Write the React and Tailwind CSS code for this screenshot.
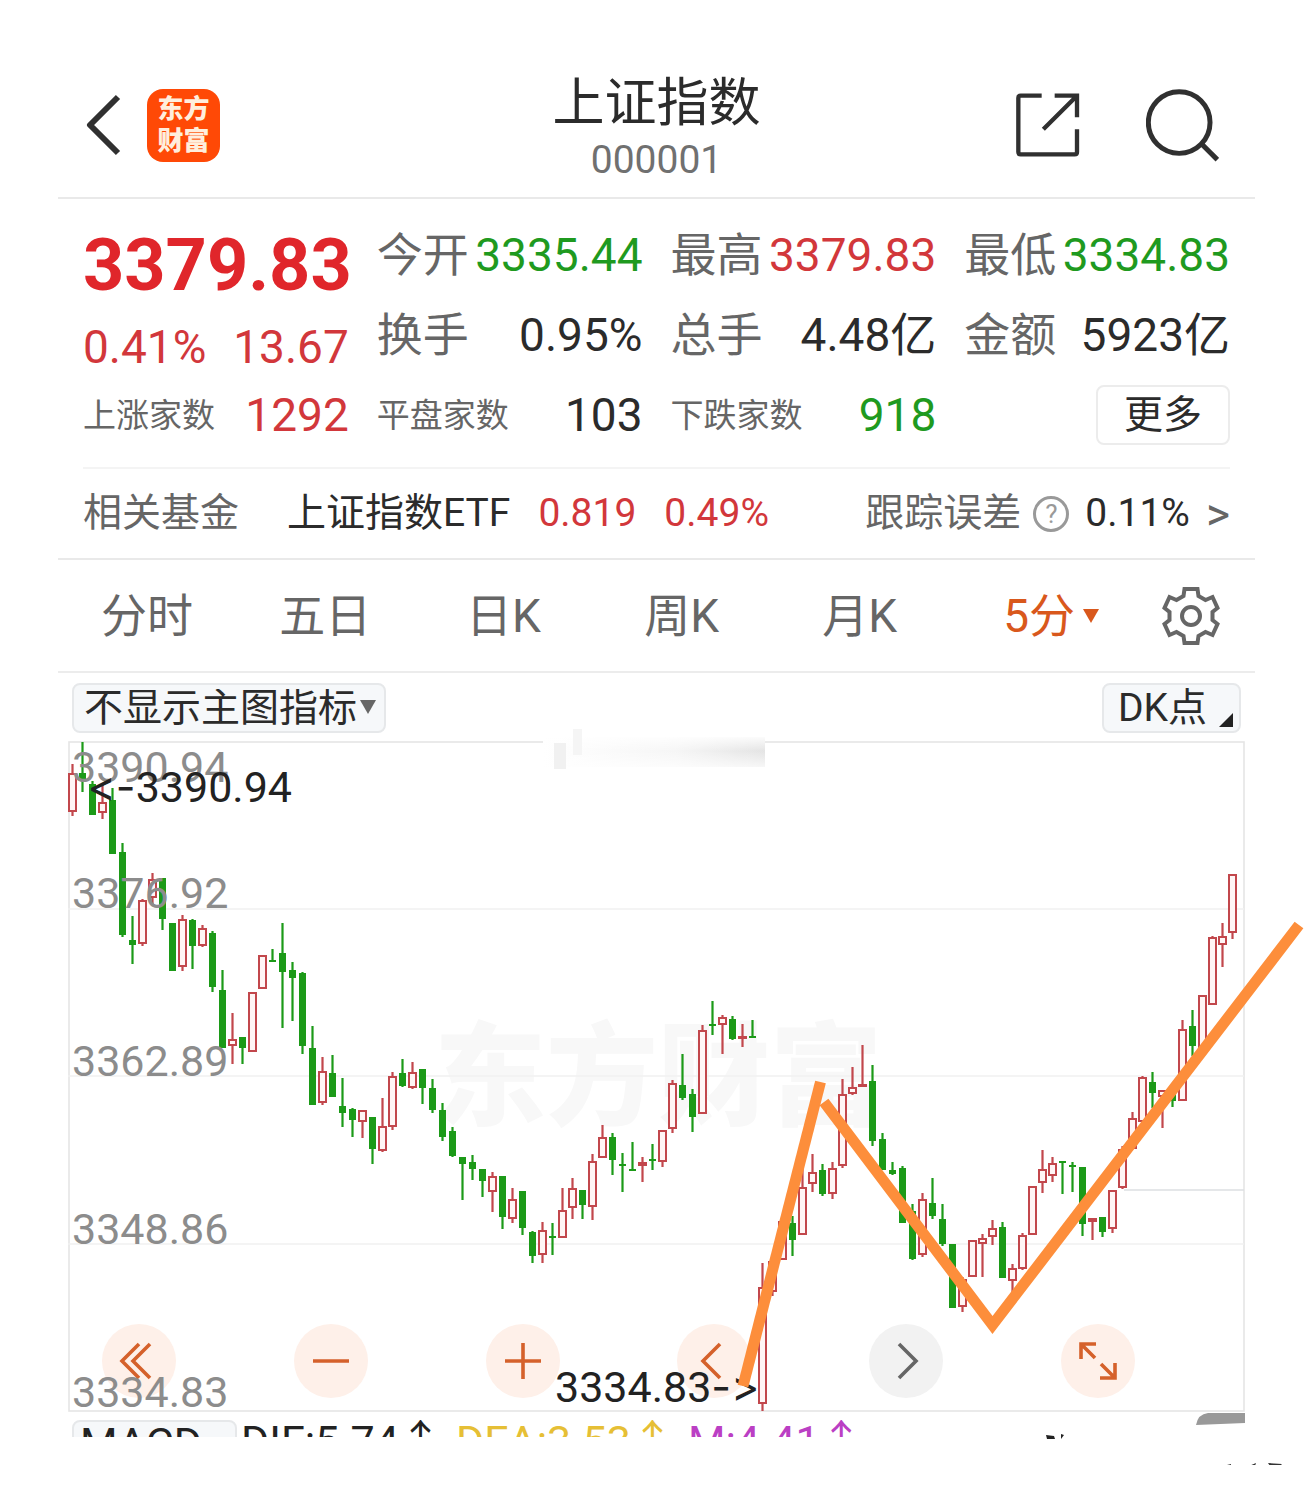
import { useState } from "react";

// [direction, high, body top, body bottom, low] in chart units
const candles = [
  ["up", 23, 32, 71, 75], ["down", 1, 32, 40, 51], ["down", 40, 43, 74, 74], ["up", 42, 61, 72, 78],
  ["down", 47, 59, 113, 113], ["down", 102, 111, 194, 196], ["down", 175, 199, 204, 223], ["up", 158, 159, 203, 205],
  ["up", 132, 138, 157, 164], ["down", 137, 137, 178, 189], ["down", 182, 182, 230, 230], ["up", 174, 178, 226, 230],
  ["down", 178, 179, 205, 228], ["up", 184, 187, 205, 206], ["down", 190, 192, 246, 251], ["down", 229, 249, 307, 307],
  ["up", 272, 298, 305, 323], ["down", 296, 296, 307, 323], ["up", 251, 251, 311, 311], ["up", 214, 214, 248, 248],
  ["down", 208, 219, 220, 220], ["down", 182, 212, 231, 287], ["down", 221, 229, 237, 280], ["down", 231, 232, 305, 313],
  ["down", 285, 307, 364, 364], ["up", 316, 330, 362, 364], ["down", 314, 332, 356, 356], ["down", 337, 365, 372, 386],
  ["down", 367, 368, 379, 396], ["up", 369, 369, 381, 397], ["down", 376, 376, 408, 423], ["up", 357, 385, 410, 411],
  ["up", 331, 335, 386, 389], ["down", 318, 332, 345, 346], ["up", 321, 331, 347, 348], ["down", 328, 328, 347, 363],
  ["down", 338, 347, 369, 372], ["down", 362, 369, 396, 400], ["down", 386, 390, 415, 416], ["down", 416, 416, 423, 459],
  ["down", 414, 421, 428, 439], ["down", 428, 428, 440, 456], ["up", 431, 435, 451, 471], ["down", 435, 435, 476, 488],
  ["up", 447, 458, 478, 482], ["down", 450, 450, 487, 494], ["down", 490, 491, 515, 522], ["up", 481, 489, 514, 522],
  ["down", 482, 495, 497, 514], ["up", 447, 469, 497, 497], ["up", 437, 447, 467, 478], ["down", 449, 449, 464, 478],
  ["up", 413, 420, 466, 479], ["up", 384, 396, 417, 417], ["down", 392, 396, 419, 434], ["down", 412, 423, 424, 451],
  ["down", 401, 428, 429, 429], ["up", 416, 421, 425, 441], ["down", 403, 418, 419, 429], ["up", 389, 389, 421, 426],
  ["up", 339, 342, 388, 392], ["down", 313, 344, 357, 359], ["down", 348, 353, 376, 391], ["up", 284, 289, 373, 373],
  ["down", 260, 283, 285, 294], ["up", 274, 276, 284, 313], ["down", 275, 278, 298, 299], ["up", 283, 295, 298, 306],
  ["down", 279, 295, 296, 296], ["up", 522, 546, 663, 670], ["up", 515, 520, 551, 555], ["up", 478, 480, 519, 519],
  ["down", 475, 482, 499, 515], ["up", 425, 446, 494, 494], ["up", 413, 431, 443, 451], ["down", 423, 429, 453, 455],
  ["up", 421, 427, 453, 458], ["up", 338, 353, 425, 427], ["up", 326, 346, 353, 354], ["up", 304, 343, 346, 346],
  ["down", 324, 340, 400, 405], ["down", 392, 398, 429, 429], ["down", 421, 429, 433, 434], ["down", 425, 427, 482, 482],
  ["down", 463, 470, 518, 519], ["up", 452, 458, 514, 516], ["down", 437, 462, 475, 478], ["down", 463, 478, 503, 505],
  ["down", 503, 503, 567, 567], ["up", 536, 538, 566, 571], ["up", 499, 499, 536, 536], ["up", 493, 497, 503, 536],
  ["up", 479, 487, 496, 504], ["down", 481, 486, 537, 537], ["up", 523, 527, 540, 552], ["up", 492, 494, 528, 529],
  ["up", 445, 445, 494, 494], ["up", 409, 428, 442, 452], ["up", 416, 422, 435, 441], ["down", 420, 420, 422, 453],
  ["down", 421, 424, 425, 451], ["down", 426, 426, 483, 495], ["up", 477, 477, 481, 499], ["down", 476, 476, 491, 496],
  ["up", 449, 449, 488, 492], ["up", 405, 408, 447, 448], ["up", 371, 377, 408, 408], ["up", 335, 336, 381, 381],
  ["down", 331, 341, 352, 367], ["up", 349, 349, 356, 387], ["down", 350, 352, 360, 366], ["up", 279, 288, 360, 360],
  ["down", 269, 285, 305, 315], ["up", 254, 254, 308, 308], ["up", 195, 196, 264, 264], ["up", 182, 195, 204, 226],
  ["up", 133, 133, 192, 198],
];

const axisLabels = [
  { text: "3390.94", y: 41 },
  { text: "3376.92", y: 167 },
  { text: "3362.89", y: 335 },
  { text: "3348.86", y: 503 },
  { text: "3334.83", y: 666 },
];

const quoteColumns = [
  [
    { label: "今开", value: "3335.44", color: "text-[#1f9a1f]" },
    { label: "换手", value: "0.95%", color: "text-[#2b2b2b]" },
    { label: "平盘家数", value: "103", color: "text-[#2b2b2b]", small: true },
  ],
  [
    { label: "最高", value: "3379.83", color: "text-[#d2373b]" },
    { label: "总手", value: "4.48亿", color: "text-[#2b2b2b]" },
    { label: "下跌家数", value: "918", color: "text-[#1f9a1f]", small: true },
  ],
  [
    { label: "最低", value: "3334.83", color: "text-[#1f9a1f]" },
    { label: "金额", value: "5923亿", color: "text-[#2b2b2b]" },
  ],
];

const periods = ["分时", "五日", "日K", "周K", "月K"];

function Header() {
  return (
    <header className="grid h-[146px] grid-cols-[1fr_auto_1fr] items-center border-b-2 border-[#e9e9e9] px-7">
      <div className="flex items-center gap-6">
        <button aria-label="返回">
          <svg className="h-[62px] w-[37px]" viewBox="0 0 37 62" fill="none" stroke="#303030" strokeWidth="6">
            <path d="M32 3 L4 31 L32 59" strokeLinejoin="round" />
          </svg>
        </button>
        <div className="grid h-[73px] w-[73px] place-content-center rounded-2xl bg-[#ff4906] text-center text-[26px] leading-8 font-black text-[#ffeedd]">
          <span>东方</span>
          <span>财富</span>
        </div>
      </div>
      <div className="flex flex-col items-center gap-1 pt-2.5">
        <h1 className="text-[52px] leading-14 text-[#2b2b2b]">上证指数</h1>
        <p className="text-[39px] leading-12 text-[#707070]">000001</p>
      </div>
      <div className="flex items-center justify-end gap-[66px] pr-2">
        <button aria-label="分享">
          <svg className="h-16 w-16" viewBox="496 99 192 192" fill="none" stroke="#303030" strokeWidth="13">
            <path d="M573 107 H510 Q503 107 503 114 V276 Q503 283 510 283 H672 Q679 283 679 276 V208" />
            <path d="M612 107 H679 V172 M578 208 L679 107" />
          </svg>
        </button>
        <button aria-label="搜索">
          <svg className="h-[73px] w-[73px]" viewBox="888 84 220 220" fill="none" stroke="#303030" strokeWidth="15">
            <circle cx="988" cy="185" r="93" />
            <path d="M1055 249 L1103 297" />
          </svg>
        </button>
      </div>
    </header>
  );
}

function Quote({ label, value, color, small }) {
  return (
    <div className="flex h-20 items-center justify-between whitespace-nowrap">
      <span className={small ? "text-[33px] text-[#666]" : "text-[46px] text-[#666]"}>{label}</span>
      <span className={`text-[46px] ${color}`}>{value}</span>
    </div>
  );
}

function Quotes() {
  return (
    <section className="mx-[25px] grid grid-cols-4 gap-7 border-b-2 border-[#f4f4f4] pt-4 pb-3 leading-none">
      <div className="text-[46px] text-[#d2373b]">
        <div className="flex h-[102px] items-center text-[72px] font-bold text-[#e0262b]">3379.83</div>
        <div className="flex h-[60px] items-center justify-between">
          <span>0.41%</span>
          <span>13.67</span>
        </div>
        <div className="flex h-[76px] items-center justify-between">
          <span className="text-[33px] text-[#666]">上涨家数</span>
          <span>1292</span>
        </div>
      </div>
      {quoteColumns.map((rows, i) => (
        <div key={i}>
          {rows.map((row) => (
            <Quote key={row.label} {...row} />
          ))}
          {i === 2 && (
            <div className="flex h-20 items-center justify-end">
              <button className="h-[60px] w-[134px] rounded-lg border-2 border-[#ececec] text-[39px] text-[#2b2b2b]">
                更多
              </button>
            </div>
          )}
        </div>
      ))}
    </section>
  );
}

function FundRow() {
  return (
    <section className="flex h-[91px] items-center justify-between border-b-2 border-[#e9e9e9] px-[25px] text-[39px] leading-none whitespace-nowrap">
      <div className="flex items-center">
        <span className="mr-12 text-[#666]">相关基金</span>
        <span className="mr-7 text-[#2b2b2b]">上证指数ETF</span>
        <span className="mr-7 text-[#d2373b]">0.819</span>
        <span className="text-[#d2373b]">0.49%</span>
      </div>
      <a href="#tracking" className="flex items-center">
        <span className="mr-3 text-[#666]">跟踪误差</span>
        <span className="mr-4 flex h-9 w-9 items-center justify-center rounded-full border-3 border-[#999] text-[26px] text-[#999]">
          ?
        </span>
        <span className="mr-4 text-[#2b2b2b]">0.11%</span>
        <span className="text-[46px] text-[#666]">&gt;</span>
      </a>
    </section>
  );
}

function PeriodTabs({ period, onChange }) {
  return (
    <nav className="flex h-[113px] items-center border-b-2 border-[#ececec] text-[46px] leading-none text-[#666]">
      {periods.map((p) => (
        <button key={p} onClick={() => onChange(p)} className={`flex-1 ${period === p ? "text-[#d9581c]" : ""}`}>
          {p}
        </button>
      ))}
      <button
        onClick={() => onChange("5分")}
        className={`flex flex-1 justify-end ${period === "5分" ? "text-[#d9581c]" : ""}`}
      >
        <span className="mr-7 flex items-center gap-2">
          5分
          <svg className="h-3.5 w-4" viewBox="0 0 16 14" fill="currentColor">
            <path d="M0 0 H16 L8 14 Z" />
          </svg>
        </span>
      </button>
      <button aria-label="设置" className="flex w-32 justify-center">
        <svg className="h-[58px] w-[58px]" viewBox="0 0 57 58" fill="none" stroke="#666" strokeWidth="4">
          <path d="M22 2 H35 L36 9 L43 13 L50 10 L55 21 L50 25 V33 L55 37 L50 48 L43 45 L36 49 L35 56 H22 L21 49 L14 45 L7 48 L2 37 L7 33 V25 L2 21 L7 10 L14 13 L21 9 Z" />
          <circle cx="28.5" cy="29" r="9" />
        </svg>
      </button>
    </nav>
  );
}

function Toolbar() {
  return (
    <div className="flex items-center justify-between px-3.5 pt-2.5 pb-2 text-[39px] leading-none text-[#2b2b2b]">
      <div className="relative">
        <select
          aria-label="主图指标"
          className="h-[50px] appearance-none rounded-lg border-2 border-[#e6e8ea] bg-[#f6f8fa] pr-6.5 pl-2.5"
        >
          <option>不显示主图指标</option>
        </select>
        <svg className="pointer-events-none absolute top-4 right-2.5 h-4 w-4" viewBox="0 0 16 16" fill="#666">
          <path d="M0 1 H16 L8 15 Z" />
        </svg>
      </div>
      <button className="flex h-[50px] items-center gap-3 rounded-lg border-2 border-[#e6e8ea] bg-[#f6f8fa] pr-1.5 pl-3.5">
        DK点
        <svg className="mt-6 h-3.5 w-3.5" viewBox="0 0 14 14" fill="#222">
          <path d="M14 0 V14 H0 Z" />
        </svg>
      </button>
    </div>
  );
}

const controls = [
  { label: "最早", path: "M37 20 L20 37 L37 54 M48 20 L31 37 L48 54" },
  { label: "缩小", path: "M19 37 H55" },
  { label: "放大", path: "M19 37 H55 M37 19 V55" },
  { label: "向左", path: "M43 20 L26 37 L43 54" },
  { label: "向右", path: "M30 20 L47 37 L30 54", muted: true },
  { label: "全屏", path: "M20 35 V20 H35 M20 20 L34 34 M54 39 V54 H39 M54 54 L40 40" },
];

function ChartControls() {
  return (
    <div className="absolute right-[110px] bottom-3.5 left-[34px] flex justify-between">
      {controls.map((c) => (
        <button
          key={c.label}
          aria-label={c.label}
          className={`rounded-full ${c.muted ? "bg-[#f2f2f2] text-[#666]" : "bg-[#fef0e9] text-[#d5612b]"}`}
        >
          <svg className="h-[74px] w-[74px]" viewBox="0 0 74 74" fill="none" stroke="currentColor" strokeWidth="3.6">
            <path d={c.path} />
          </svg>
        </button>
      ))}
    </div>
  );
}

function Candle({ index, data }) {
  const [dir, high, top, bottom, low] = data;
  const x = 4.5 + index * 10;
  const color = dir === "up" ? "#c2474c" : "#1c9a18";

  return (
    <g stroke={color} strokeWidth="2.2">
      <path d={`M${x} ${high} V${top} M${x} ${bottom} V${low}`} />
      {dir === "up" ? (
        <rect x={x - 3.5} y={top + 1} width="7" height={Math.max(bottom - top - 2, 1)} fill="#fff5f5" strokeWidth="2" />
      ) : (
        <rect x={x - 3.5} y={top} width="7" height={Math.max(bottom - top, 2)} fill={color} stroke="none" />
      )}
    </g>
  );
}

function Chart() {
  return (
    <div className="relative mx-2.5">
      <ChartControls />
      <svg className="pointer-events-none relative block h-auto w-full overflow-visible" viewBox="0 0 1177 671">
        <defs>
          <linearGradient id="smudge">
            <stop offset="0" stopColor="#fff" />
            <stop offset="0.6" stopColor="#f6f6f6" />
            <stop offset="1" stopColor="#e4e4e4" />
          </linearGradient>
          <linearGradient id="smudgeFade" x2="0" y2="1">
            <stop offset="0" stopColor="#fff" />
            <stop offset="0.5" stopColor="#fff" stopOpacity="0" />
            <stop offset="1" stopColor="#fff" stopOpacity="0.7" />
          </linearGradient>
        </defs>

        <text x="366" y="376" fontSize="112" fontWeight="900" fill="#f8f8f8">东方财富</text>

        <g fill="none" stroke="#e5e5e5" strokeWidth="1.6">
          <rect x="1" y="1" width="1175" height="669" />
          <path d="M0 168 H1176 M0 335 H1176 M0 503 H1176" stroke="#f1f1f1" />
          <path d="M1056 449 H1176" stroke="#dcdfe2" />
        </g>

        {/* erased patch on the top border */}
        <rect x="475" y="-9" width="222" height="37" fill="#fff" />
        <rect x="475" y="-4" width="222" height="30" fill="url(#smudge)" />
        <rect x="475" y="-6" width="222" height="32" fill="url(#smudgeFade)" />
        <rect x="486" y="2" width="12" height="26" fill="#f1f1f1" />
        <rect x="505" y="-12" width="9" height="26" fill="#f5f5f5" />

        {candles.map((c, i) => (
          <Candle key={i} index={i} data={c} />
        ))}

        <g fontSize="43" fill="#8c8c8c">
          {axisLabels.map((l) => (
            <text key={l.text} x="4" y={l.y}>{l.text}</text>
          ))}
        </g>
        <g fontSize="43" fill="#222" className="[font-variant-ligatures:none]">
          <text x="224" y="61" textAnchor="end">
            <tspan fontFamily="Inter">&lt;-</tspan>3390.94
          </text>
          <text x="487" y="661">
            3334.83<tspan fontFamily="Inter">-&gt;</tspan>
          </text>
        </g>

        <g fill="none" stroke="#fd8e3b" strokeWidth="11">
          <path d="M752.5 341 L675 645" />
          <path d="M756 361 L924.5 584 L1231 184" />
        </g>
      </svg>
    </div>
  );
}

function IndicatorRow() {
  return (
    <div className="flex h-[17px] items-start overflow-hidden px-3.5 text-[43px] leading-none whitespace-nowrap">
      <span className="mr-1 w-[165px] shrink-0 rounded-lg border-2 border-[#e6e8ea] bg-[#f6f8fa] pl-1.5 text-[#222]">
        MACD
      </span>
      <span className="mr-3.5 shrink-0 text-[#222]">DIF:5.74↑</span>
      <span className="mr-3.5 shrink-0 text-[#e6bf35]">DEA:3.53↑</span>
      <span className="shrink-0 text-[#bb3fc4]">M:4.41↑</span>
    </div>
  );
}

export default function App() {
  const [period, setPeriod] = useState("5分");

  return (
    <main className="bg-white px-[58px] pt-[53px] pb-7 font-['Roboto','Noto_Sans_CJK_SC',sans-serif]">
      <Header />
      <Quotes />
      <FundRow />
      <PeriodTabs period={period} onChange={setPeriod} />
      <Toolbar />
      <Chart />
      <div className="relative pt-2">
        <IndicatorRow />
        <svg className="pointer-events-none absolute top-0 right-0 h-14 w-[212px] overflow-visible" viewBox="0 0 212 56">
          <path d="M153 13 Q155 2 165 1 H202 V11 Z" fill="#999" />
          <path d="M3 23 L11 24 L12 27 L4 27 M18 22 L21 23 L18 27 Z" fill="#222" />
          <path d="M206 54 L213 51 L212 54 Z M225 51 L239 52 L237 54 L227 54 Z M184 53 L188 52 V54 Z" fill="#333" />
        </svg>
      </div>
    </main>
  );
}
